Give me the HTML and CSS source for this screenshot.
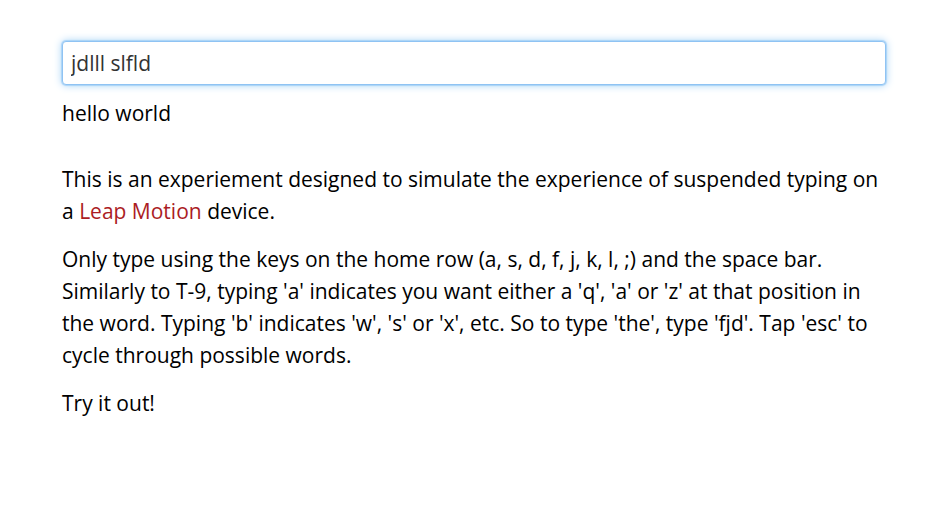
FILE: index.html
```html
<!DOCTYPE html>
<html lang="en">
<head>
<meta charset="utf-8">
<title>Suspended Typing</title>
<link rel="stylesheet" href="styles.css">
</head>
<body>
<main class="page">
<input class="entry" type="text" value="jdlll slfld" aria-label="Type here">
<output class="result">hello world</output>
<p>This is an experiement designed to simulate the experience of suspended typing on a <a href="#">Leap Motion</a> device.</p>
<p>Only type using the keys on the home row (a, s, d, f, j, k, l, ;) and the space bar. Similarly to T-9, typing 'a' indicates you want either a 'q', 'a' or 'z' at that position in the word. Typing 'b' indicates 'w', 's' or 'x', etc. So to type 'the', type 'fjd'. Tap 'esc' to cycle through possible words.</p>
<p>Try it out!</p>
</main>
</body>
</html>
```

FILE: styles.css
```css
* {
  box-sizing: border-box;
}

body {
  margin: 0;
  background: #fff;
  color: #000;
  font: 21px/32px "Open Sans", sans-serif;
}

.page {
  padding: 41px 54px 40px 62px;
}

.entry {
  display: block;
  width: 100%;
  height: 44px;
  margin: 0;
  padding: 0 8px;
  border: 1px solid #8fc3f3;
  border-radius: 4px;
  outline: none;
  box-shadow: 0 0 8px #9fcff5, 0 0 1px 1px #b5dafa;
  background: #fff;
  color: #333;
  font: inherit;
}

.result {
  display: block;
  margin: 12px 0 34px;
}

p {
  margin: 0 0 16px;
}

a {
  color: #ab1c24;
  text-decoration: none;
}
```
